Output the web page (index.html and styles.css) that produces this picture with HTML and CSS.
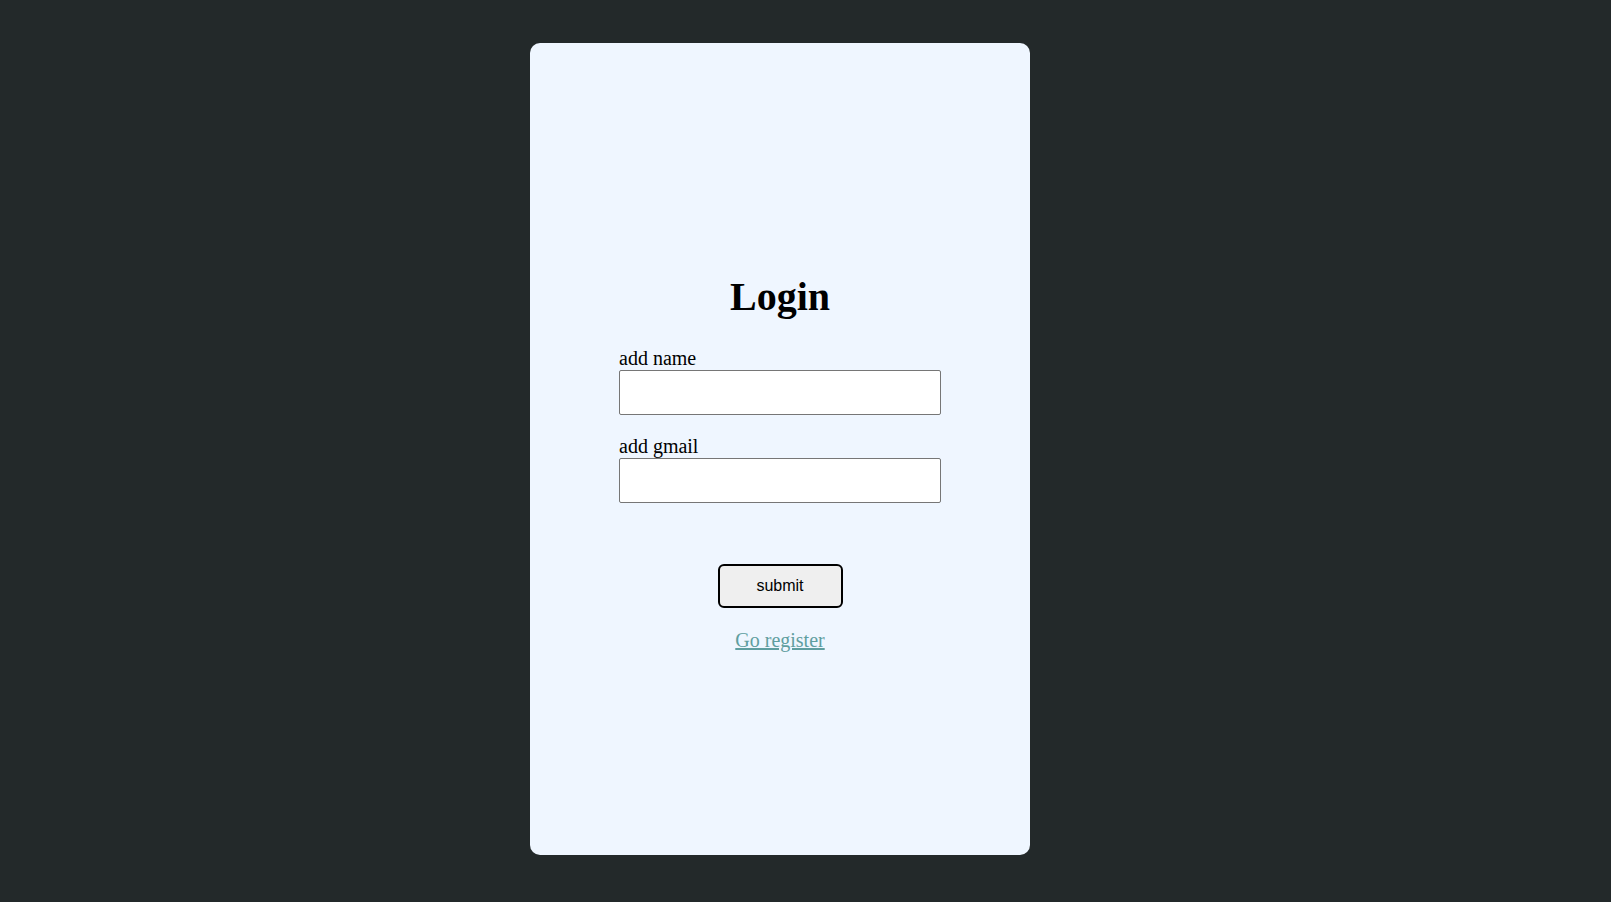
FILE: index.html
```html
<!DOCTYPE html>
<html lang="en">
<head>
<meta charset="utf-8">
<title>Login</title>
<link rel="stylesheet" href="styles.css">
</head>
<body>
<div class="page">
  <main class="card">
    <h1 class="title">Login</h1>
    <form class="form">
      <label class="label" for="name">add name</label>
      <input class="field" id="name" type="text">
      <label class="label label-gap" for="gmail">add gmail</label>
      <input class="field" id="gmail" type="text">
      <button class="submit" type="button">submit</button>
    </form>
    <a class="link" href="#">Go register</a>
  </main>
</div>
</body>
</html>
```
FILE: styles.css
```css
html, body {
  margin: 0;
  padding: 0;
  background: #23292a;
  height: 100%;
}
body {
  font-family: "Liberation Serif", "Times New Roman", serif;
  font-size: 20px;
  color: #000;
}
.page {
  padding: 43px 0 0 530px;
}
.card {
  width: 500px;
  height: 812px;
  background: #eff6ff;
  border-radius: 10px;
  display: flex;
  flex-direction: column;
  align-items: center;
  justify-content: center;
}
.title {
  font-size: 40px;
  font-weight: bold;
  margin: 27px 0;
  line-height: 46px;
}
.form {
  width: 322px;
  display: flex;
  flex-direction: column;
}
.label {
  display: block;
  line-height: 23px;
}
.label-gap {
  margin-top: 20px;
}
.field {
  box-sizing: border-box;
  width: 322px;
  height: 45px;
  border: 1px solid #767676;
  border-radius: 2px;
  background: #fff;
  margin: 0;
  padding: 1px 2px;
}
.submit {
  align-self: center;
  box-sizing: border-box;
  width: 125px;
  height: 44px;
  margin-top: 61px;
  border: 2px solid #000;
  border-radius: 6px;
  background: #efefef;
  font-family: "Liberation Sans", Arial, sans-serif;
  font-size: 16px;
  color: #000;
  padding: 0;
}
.link {
  margin-top: 21px;
  line-height: 23px;
  color: #5f9ea0;
  text-decoration: underline;
}
```
